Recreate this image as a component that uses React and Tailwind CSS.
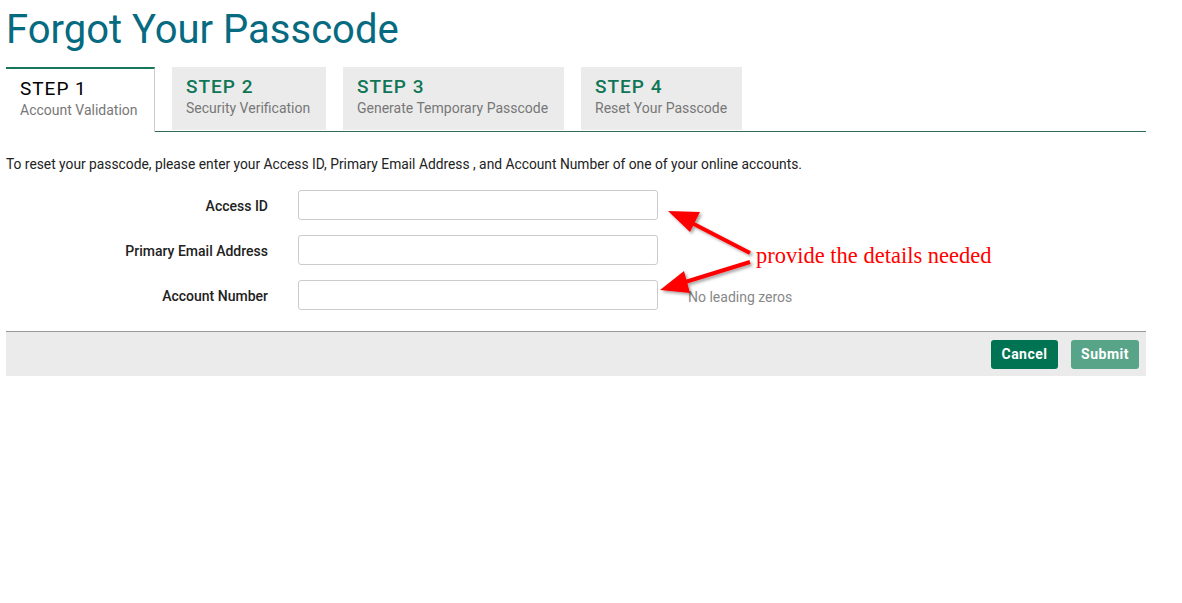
export default function App() {
  const steps = [
    { n: 'STEP 1', label: 'Account Validation', w: 'w-[149px]', active: true },
    { n: 'STEP 2', label: 'Security Verification', w: 'w-[154px]' },
    { n: 'STEP 3', label: 'Generate Temporary Passcode', w: 'w-[221px]' },
    { n: 'STEP 4', label: 'Reset Your Passcode', w: 'w-[161px]' },
  ];
  const fields = ['Access ID', 'Primary Email Address', 'Account Number'];

  return (
    <div className="relative min-h-[603px] bg-white font-['Roboto',sans-serif] text-[#222]">
      <div className="ml-[6px] w-[1140px]">
        <h1 className="text-[40px] leading-[48px] pt-[6px] text-[#066a80] font-normal">Forgot Your Passcode</h1>

        {/* Step tabs */}
        <div className="mt-[13px] flex gap-[17px] border-b border-[#2f6a55] h-[65px]">
          {steps.map((s) =>
            s.active ? (
              <div key={s.n} className={`-mb-px bg-white border-t-2 border-t-[#18775a] border-r border-r-[#ccc] px-[14px] pt-[9px] ${s.w}`}>
                <div className="text-[19px] tracking-[1px] leading-[22px] text-black">{s.n}</div>
                <div className="text-[14px] leading-[18px] text-[#777] mt-[1px]">{s.label}</div>
              </div>
            ) : (
              <div key={s.n} className={`bg-[#ebebeb] px-[14px] pt-[9px] h-[63px] ${s.w}`}>
                <div className="text-[19px] tracking-[1px] leading-[22px] font-medium text-[#0e7657]">{s.n}</div>
                <div className="text-[14px] leading-[18px] text-[#777] mt-[1px]">{s.label}</div>
              </div>
            )
          )}
        </div>

        <p className="mt-[24px] text-[13.8px] leading-[16px]">
          To reset your passcode, please enter your Access ID, Primary Email Address , and Account Number of one of your online accounts.
        </p>

        {/* Form */}
        <div className="mt-[18px] flex flex-col gap-[15px]">
          {fields.map((f) => (
            <div key={f} className="flex items-center h-[30px]">
              <label className="w-[262px] text-right text-[14px] font-medium pt-[3px]">{f}</label>
              <input className="ml-[30px] w-[360px] h-[30px] border border-[#ccc] rounded-[3px] bg-white" />
              {f === 'Account Number' && (
                <span className="ml-[30px] mt-[5px] text-[14px] text-[#888]">No leading zeros</span>
              )}
            </div>
          ))}
        </div>

        {/* Footer */}
        <div className="mt-[21px] border-t border-[#999] bg-[#ebebeb] h-[45px] flex items-center justify-end gap-[13px] pr-[7px]">
          <button className="h-[29px] w-[67px] rounded-[3px] bg-[#007352] text-white text-[14px] font-bold tracking-[0.5px]">Cancel</button>
          <button className="h-[29px] w-[68px] rounded-[3px] bg-[#58a488] text-white text-[14px] font-bold tracking-[0.5px]">Submit</button>
        </div>
      </div>

      {/* Annotation overlay */}
      <svg className="absolute left-0 top-0" width="1182" height="603" viewBox="0 0 1182 603">
        <defs>
          <filter id="sh" x="-20%" y="-20%" width="140%" height="140%">
            <feDropShadow dx="2" dy="2" stdDeviation="1.5" floodColor="#000" floodOpacity="0.35" />
          </filter>
        </defs>
        <g fill="#ff0000" stroke="#ff0000" filter="url(#sh)">
          <line x1="750" y1="253" x2="688" y2="221" strokeWidth="4" />
          <polygon points="668,211 700,212 690,232" stroke="none" />
          <line x1="750" y1="262" x2="682" y2="283" strokeWidth="4" />
          <polygon points="660,290 684,271 690,293" stroke="none" />
        </g>
      </svg>
      <div className="absolute left-[756px] top-[243px] font-['Liberation_Serif',serif] text-[22.5px] leading-[26px] text-[#ff0000]">
        provide the details needed
      </div>
    </div>
  );
}
